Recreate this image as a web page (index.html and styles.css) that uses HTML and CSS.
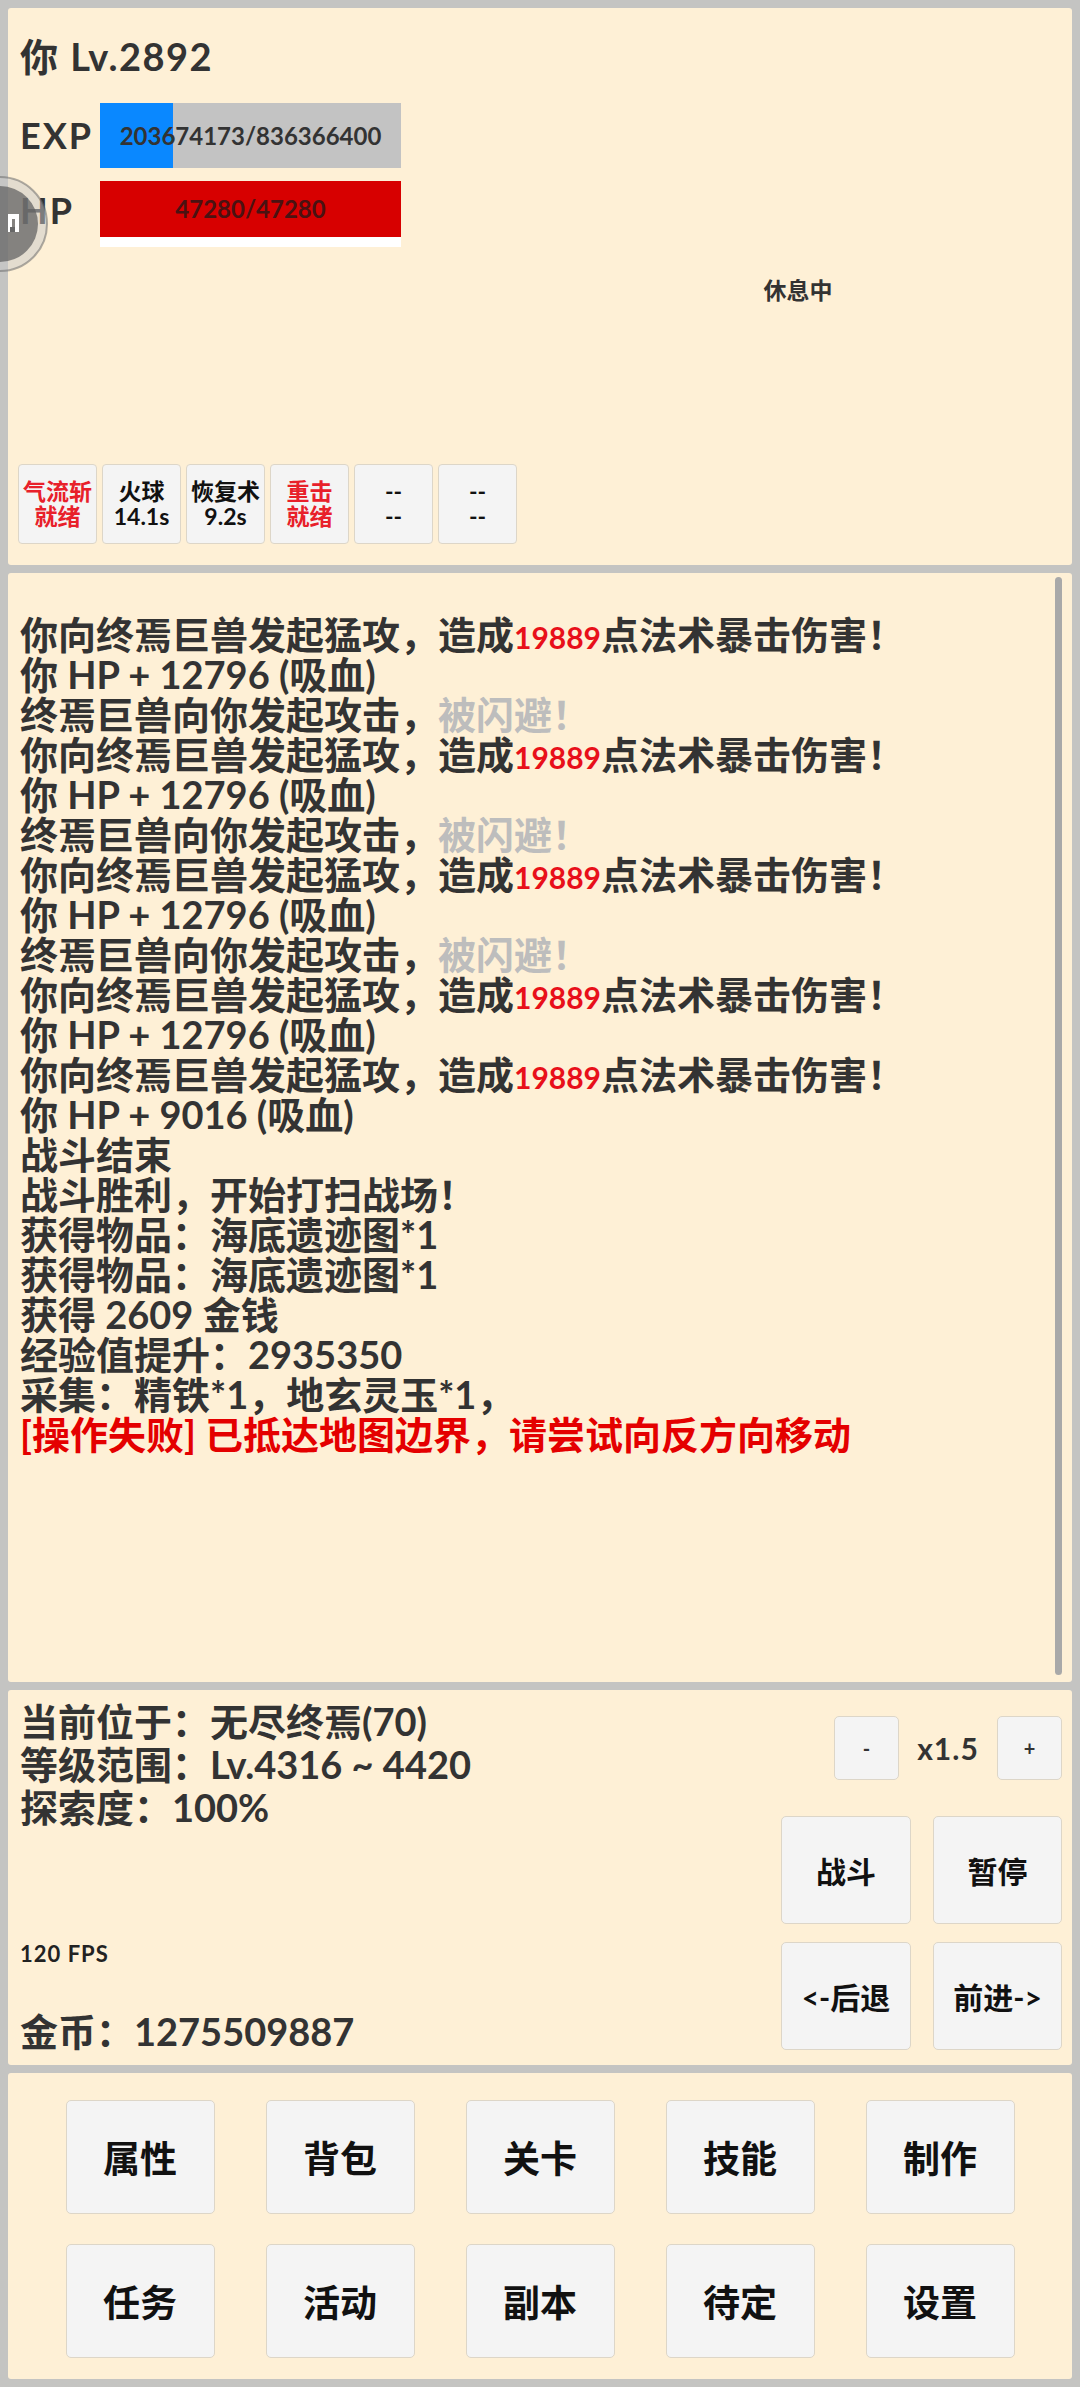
FILE: index.html
```html
<!DOCTYPE html>
<html lang="zh-CN">
<head>
<meta charset="UTF-8">
<meta name="viewport" content="width=device-width, initial-scale=1.0">
<title>挂机</title>
<link rel="stylesheet" href="styles.css">
</head>
<body>
<div class="app">
  <div class="panel status">
    <div class="status-top">
      <div class="player">
        <div class="name">你 Lv.2892</div>
        <div class="bar-row">
          <div class="bar-label">EXP</div>
          <div class="bar exp">
            <div class="fill" style="width: 24.35%"></div>
            <span>203674173/836366400</span>
          </div>
        </div>
        <div class="bar-row hp-row">
          <div class="bar-label">HP</div>
          <div class="bar hp">
            <div class="fill" style="width: 100%"></div>
            <span>47280/47280</span>
          </div>
        </div>
      </div>
      <div class="enemy">休息中</div>
    </div>
    <div class="skills">
      <div class="skill ready"><div>气流斩</div><div>就绪</div></div>
      <div class="skill"><div>火球</div><div>14.1s</div></div>
      <div class="skill"><div>恢复术</div><div>9.2s</div></div>
      <div class="skill ready"><div>重击</div><div>就绪</div></div>
      <div class="skill"><div>--</div><div>--</div></div>
      <div class="skill"><div>--</div><div>--</div></div>
    </div>
  </div>

  <div class="panel battle">
    <div class="log">
      <div>你向终焉巨兽发起猛攻，造成<span class="dmg">19889</span>点法术暴击伤害！</div>
      <div>你 HP + 12796 (吸血)</div>
      <div>终焉巨兽向你发起攻击，<span class="miss">被闪避！</span></div>
      <div>你向终焉巨兽发起猛攻，造成<span class="dmg">19889</span>点法术暴击伤害！</div>
      <div>你 HP + 12796 (吸血)</div>
      <div>终焉巨兽向你发起攻击，<span class="miss">被闪避！</span></div>
      <div>你向终焉巨兽发起猛攻，造成<span class="dmg">19889</span>点法术暴击伤害！</div>
      <div>你 HP + 12796 (吸血)</div>
      <div>终焉巨兽向你发起攻击，<span class="miss">被闪避！</span></div>
      <div>你向终焉巨兽发起猛攻，造成<span class="dmg">19889</span>点法术暴击伤害！</div>
      <div>你 HP + 12796 (吸血)</div>
      <div>你向终焉巨兽发起猛攻，造成<span class="dmg">19889</span>点法术暴击伤害！</div>
      <div>你 HP + 9016 (吸血)</div>
      <div>战斗结束</div>
      <div>战斗胜利，开始打扫战场！</div>
      <div>获得物品：海底遗迹图*1</div>
      <div>获得物品：海底遗迹图*1</div>
      <div>获得 2609 金钱</div>
      <div>经验值提升：2935350</div>
      <div>采集：精铁*1，地玄灵玉*1，</div>
      <div class="fail">[操作失败] 已抵达地图边界，请尝试向反方向移动</div>
    </div>
    <div class="scrollbar"></div>
  </div>

  <div class="panel map">
    <div class="info">
      <div class="info-lines">
        <div>当前位于：无尽终焉(70)</div>
        <div>等级范围：Lv.4316 ~ 4420</div>
        <div>探索度：100%</div>
      </div>
      <div class="fps">120 FPS</div>
      <div class="gold">金币：1275509887</div>
    </div>
    <div class="controls">
      <div class="speed">
        <div class="btn small">-</div>
        <div class="speed-value">x1.5</div>
        <div class="btn small">+</div>
      </div>
      <div class="actions">
        <div class="btn">战斗</div>
        <div class="btn">暂停</div>
        <div class="btn">&lt;-后退</div>
        <div class="btn">前进-&gt;</div>
      </div>
    </div>
  </div>

  <div class="panel menu">
    <div class="btn">属性</div>
    <div class="btn">背包</div>
    <div class="btn">关卡</div>
    <div class="btn">技能</div>
    <div class="btn">制作</div>
    <div class="btn">任务</div>
    <div class="btn">活动</div>
    <div class="btn">副本</div>
    <div class="btn">待定</div>
    <div class="btn">设置</div>
  </div>
</div>

<div class="float-ball">
  <svg width="100" height="100" viewBox="0 0 100 100">
    <circle cx="50" cy="50" r="47" fill="rgba(200,200,200,0.5)" stroke="rgba(110,110,110,0.55)" stroke-width="2"/>
    <circle cx="50" cy="50" r="38" fill="rgba(95,95,95,0.72)"/>
    <path d="M58 40 h11 v18 h-11 z M62 45 h3 v8 h-3 z" fill="#fff" fill-rule="evenodd"/>
    <rect x="60" y="53" width="5" height="5" fill="rgba(95,95,95,0.95)"/>
  </svg>
</div>
</body>
</html>
```

FILE: styles.css
```css
* {
box-sizing: border-box;
}

body {
margin: 0;
position: relative;
overflow: hidden;
background-color: #c4c4c2;
font-family: "Lato", "Noto Sans CJK SC", sans-serif;
font-weight: bold;
color: #333;
}

.app {
display: flex;
flex-direction: column;
gap: 8px;
padding: 8px;
height: 2387px;
}

.panel {
background-color: #fef0d6;
border-radius: 3px;
}

/* status */
.status {
height: 557px;
display: flex;
flex-direction: column;
padding: 24px 12px 21px 10px;
}

.status-top {
display: flex;
flex: 1;
}

.player {
width: 518px;
padding-left: 2px;
}

.name {
height: 48px;
font-size: 38px;
line-height: 48px;
letter-spacing: 1.5px;
}

.bar-row {
display: flex;
margin-top: 23px;
}

.hp-row {
margin-top: 13px;
}

.bar-label {
width: 80px;
font-size: 36px;
line-height: 65px;
letter-spacing: 2px;
}

.hp-row .bar-label {
line-height: 58px;
}

.bar {
position: relative;
width: 301px;
height: 65px;
background-color: #c3c3c3;
}

.bar .fill {
position: absolute;
left: 0;
top: 0;
bottom: 0;
background-color: #0a88ff;
}

.bar span {
position: relative;
display: block;
text-align: center;
font-size: 24px;
line-height: 65px;
color: #333;
}

.bar.hp {
height: 66px;
background-color: #fff;
}

.bar.hp .fill {
bottom: auto;
height: 56px;
background-color: #d70000;
}

.bar.hp span {
line-height: 56px;
color: #4a1212;
}

.enemy {
flex: 1;
text-align: center;
padding-top: 243px;
font-size: 23px;
line-height: 30px;
color: #333;
}

.skills {
display: flex;
gap: 5px;
}

.skill {
width: 79px;
height: 80px;
display: flex;
flex-direction: column;
justify-content: center;
align-items: center;
background-color: #f4f4f4;
border: 1px solid #ddd6c8;
border-radius: 4px;
font-size: 23px;
line-height: 25px;
color: #111;
}

.skill div {
height: 25px;
}

.skill.ready {
color: #e8202a;
}

/* battle log */
.battle {
height: 1109px;
display: flex;
padding: 4px 10px 7px 12px;
}

.log {
flex: 1;
padding-top: 37px;
font-size: 38px;
line-height: 40px;
white-space: nowrap;
}

.log div {
height: 40px;
}

.dmg {
font-size: 30px;
color: #e8101a;
}

.miss {
color: #bdbdbd;
}

.log .fail {
color: #e40000;
}

.scrollbar {
width: 7px;
background-color: #a9a9a9;
border-radius: 4px;
}

/* map info */
.map {
height: 375px;
display: flex;
padding: 0 10px 0 12px;
}

.info {
flex: 1;
display: flex;
flex-direction: column;
}

.info-lines {
margin-top: 10px;
font-size: 38px;
line-height: 43px;
}

.info-lines div {
height: 43px;
}

.fps {
height: 24px;
margin-top: 113px;
font-size: 22px;
line-height: 24px;
letter-spacing: 1px;
color: #222;
}

.gold {
height: 43px;
margin-top: 44px;
font-size: 38px;
line-height: 43px;
}

.controls {
width: 281px;
padding-top: 26px;
}

.speed {
display: flex;
justify-content: flex-end;
align-items: center;
gap: 18px;
}

.speed-value {
width: 62px;
text-align: center;
font-size: 30px;
letter-spacing: 1px;
color: #333;
}

.btn {
display: flex;
align-items: center;
justify-content: center;
background-color: #f4f4f4;
border: 1px solid #ddd6c8;
border-radius: 5px;
color: #111;
}

.btn.small {
width: 65px;
height: 64px;
font-size: 20px;
color: #333;
}

.actions {
display: grid;
grid-template-columns: 130px 129px;
grid-auto-rows: 108px;
gap: 18px 22px;
margin-top: 36px;
font-size: 30px;
}

/* bottom menu */
.menu {
height: 306px;
display: grid;
grid-template-columns: repeat(5, 149px);
grid-auto-rows: 114px;
gap: 30px 51px;
justify-content: center;
padding-top: 27px;
font-size: 37px;
}

.float-ball {
position: absolute;
left: -50px;
top: 174px;
width: 100px;
height: 100px;
}
```
